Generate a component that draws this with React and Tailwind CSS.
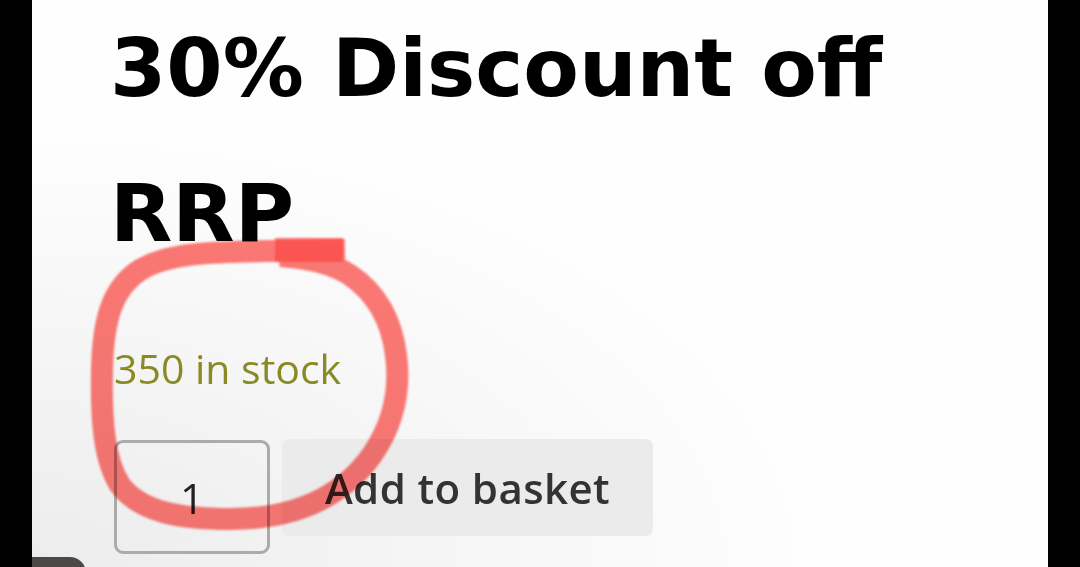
export default function App() {
  return (
    <div className="relative flex w-[1080px] h-[567px] overflow-hidden bg-black">
      <div className="w-[32px] shrink-0 bg-black" />
      <div className="relative flex-1 bg-[radial-gradient(ellipse_at_bottom_left,#ececec_0%,#f6f6f6_30%,#fefefe_55%)] pl-[82px]">
        <h1
          className="mt-[-4px] ml-[-4px] text-[81px] leading-[145px] font-bold text-black"
          style={{ fontFamily: '"DejaVu Sans", sans-serif' }}
        >
          30% Discount off
          <br />
          RRP
        </h1>
        <p
          className="mt-[52px] text-[41px] leading-[60px] text-[#8a8a24]"
          style={{ fontFamily: '"Open Sans", sans-serif' }}
        >
          350 in stock
        </p>
        <div
          className="mt-[41px] flex items-start gap-[12px]"
          style={{ fontFamily: '"Open Sans", sans-serif' }}
        >
          <div className="mt-[1px] flex h-[114px] w-[156px] items-center justify-center rounded-[9px] border-[3px] border-[#ababab] text-[42px] text-[#222]">
            1
          </div>
          <button className="flex h-[97px] w-[371px] items-center justify-center rounded-[7px] bg-[#ebebeb] text-[42px] font-semibold tracking-[0.4px] text-[#333]">
            Add to basket
          </button>
        </div>
      </div>
      <div className="w-[32px] shrink-0 bg-black" />
      <div className="absolute left-[32px] top-[557px] h-[20px] w-[54px] rounded-tr-[16px] bg-[#4b4848]" />
      <svg
        className="pointer-events-none absolute left-0 top-0 mix-blend-multiply"
        width="1080"
        height="567"
        viewBox="0 0 1080 567"
        fill="none"
      >
        <g stroke="#ff4c46" strokeOpacity="0.74" strokeWidth="22" style={{ filter: 'blur(1px)' }}>
          <path
            d="M345 250 L275 251 C215 252 170 252 140 270 C112 288 103 320 102 370 C101 420 104 460 120 485 C140 512 180 519 230 519 C290 519 340 500 372 455 C396 420 400 385 396 355 C391 315 372 290 350 275 C335 265 310 258 280 256"
            strokeLinecap="butt"
            strokeLinejoin="round"
          />
          <path d="M343 250 L275 250" strokeLinecap="butt" strokeWidth="24" />
        </g>
      </svg>
    </div>
  );
}
